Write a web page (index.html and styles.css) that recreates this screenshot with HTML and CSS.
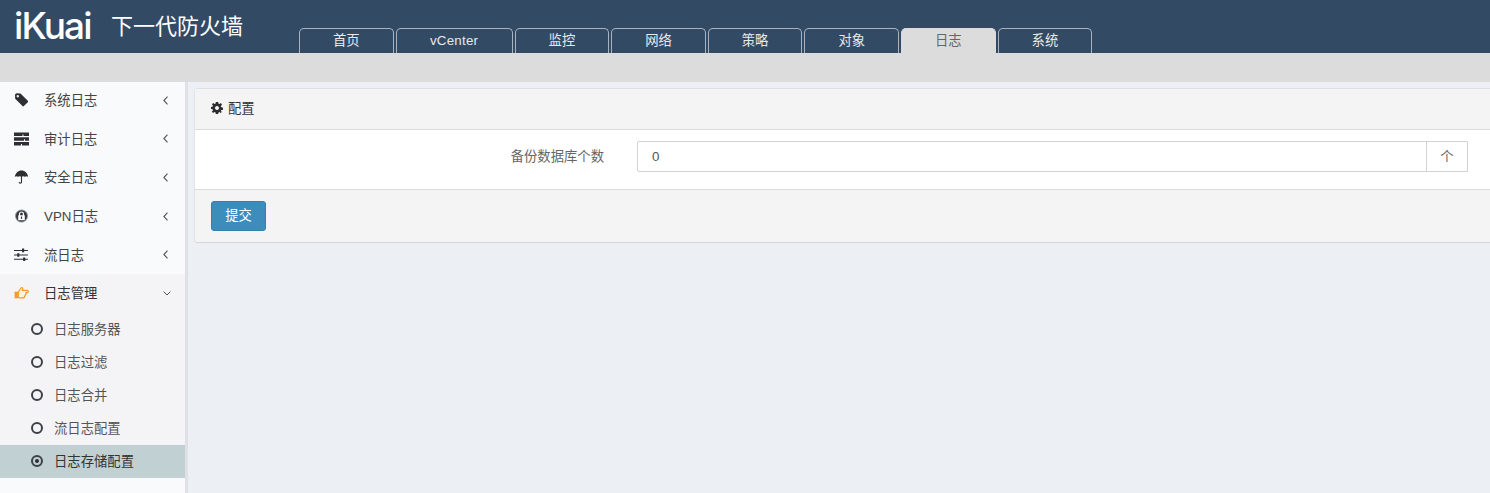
FILE: index.html
```html
<!DOCTYPE html>
<html lang="zh">
<head>
<meta charset="utf-8">
<title>iKuai</title>
<link rel="stylesheet" href="styles.css">
</head>
<body>
<header class="topbar">
  <div class="logo">iKuai</div>
  <div class="slogan">下一代防火墙</div>
  <nav class="tabs">
    <a class="tab">首页</a>
    <a class="tab tab-wide">vCenter</a>
    <a class="tab">监控</a>
    <a class="tab">网络</a>
    <a class="tab">策略</a>
    <a class="tab">对象</a>
    <a class="tab active">日志</a>
    <a class="tab">系统</a>
  </nav>
</header>
<div class="strip"></div>
<div class="main">
  <aside class="sidebar">
    <div class="item item-first">
      <svg class="ico" viewBox="0 0 14 14"><path fill="#2f2f33" fill-rule="evenodd" d="M.5 1.500 2 .2 6 .5l7.300 7.300a1 1 0 0 1 0 1.400l-3.900 3.900a1 1 0 0 1-1.400 0L.7 5.800zM3.300 2a1.200 1.200 0 1 0 .01 0z"/></svg>
      <span class="label">系统日志</span><svg class="chev" viewBox="0 0 5 9"><path d="M4.500.7.900 4.500l3.600 3.800" fill="none" stroke="#555" stroke-width="1.1"/></svg>
    </div>
    <div class="item">
      <svg class="ico" viewBox="0 0 15 13"><path fill="#2f2f33" d="M0 0h15v3.500H9.500V2H8.500v1.500H0zM0 4.700h15v3.500H11V6.700H10v1.500H0zM0 9.400h15v3.500H8V11.400H7v1.500H0z"/></svg>
      <span class="label">审计日志</span><svg class="chev" viewBox="0 0 5 9"><path d="M4.500.7.900 4.500l3.600 3.800" fill="none" stroke="#555" stroke-width="1.1"/></svg>
    </div>
    <div class="item">
      <svg class="ico" viewBox="0 0 14 14"><path fill="#2f2f33" d="M7 .5C3.500.5 1 3 .3 6.800c1-.9 2.200-.9 3.200 0 1-.9 2.500-.9 3.500 0 1-.9 2.500-.9 3.500 0 1-.9 2.200-.9 3.200 0C13 3 10.500.5 7 .5z"/><path d="M7 6v6c0 1.600-2.300 1.500-2.400 0" fill="none" stroke="#2f2f33" stroke-width="1.100"/></svg>
      <span class="label">安全日志</span><svg class="chev" viewBox="0 0 5 9"><path d="M4.500.7.900 4.500l3.600 3.800" fill="none" stroke="#555" stroke-width="1.1"/></svg>
    </div>
    <div class="item">
      <svg class="ico" viewBox="0 0 14 14"><circle cx="7" cy="7" r="6.500" fill="#8d8f93"/><circle cx="7" cy="7" r="5.500" fill="#38383c"/><path d="M5 7V5a2 2 0 0 1 4 0v2" fill="none" stroke="#fff" stroke-width="1.200"/><rect x="3.700" y="6.300" width="6.600" height="5" rx=".5" fill="#fff"/><rect x="6.400" y="7.500" width="1.200" height="2.400" fill="#333"/></svg>
      <span class="label">VPN日志</span><svg class="chev" viewBox="0 0 5 9"><path d="M4.500.7.900 4.500l3.600 3.800" fill="none" stroke="#555" stroke-width="1.1"/></svg>
    </div>
    <div class="item">
      <svg class="ico" viewBox="0 0 14 12"><path fill="#2f2f33" d="M0 1.300h7.500V0h2v1.300H13v1H9.500v1.200h-2V2.300H0zM0 5.500h3V4.300h2v1.200h8v1H5v1.200H3V6.500H0zM0 9.500h8.500V8.300h2v1.200H13v1h-2.500v1.200h-2v-1.200H0z"/></svg>
      <span class="label">流日志</span><svg class="chev" viewBox="0 0 5 9"><path d="M4.500.7.900 4.500l3.600 3.800" fill="none" stroke="#555" stroke-width="1.1"/></svg>
    </div>
    <div class="group">
      <div class="item item-open">
        <svg class="ico" viewBox="0 0 15 13"><path fill="#fff3e2" stroke="#f39a2d" stroke-width="1.200" d="M4.300 5.500 7.300 1.200c1.500-.5 2 1 1 2.600h4.900c1.500 0 1.500 2.200 0 2.300H12c.5.900.1 1.600-.6 1.900.2 1-.2 1.600-.9 1.800.1 1-.5 1.600-1.400 1.600H5.600L4.300 11z"/><rect x=".6" y="5.200" width="3.300" height="6.600" fill="#f39a2d"/></svg>
        <span class="label">日志管理</span><svg class="chev-down" viewBox="0 0 8 5"><path d="M.6.600 4 4 7.400.600" fill="none" stroke="#555" stroke-width="1"/></svg>
      </div>
      <div class="sub"><i class="dot"></i><span>日志服务器</span></div>
      <div class="sub"><i class="dot"></i><span>日志过滤</span></div>
      <div class="sub"><i class="dot"></i><span>日志合并</span></div>
      <div class="sub"><i class="dot"></i><span>流日志配置</span></div>
      <div class="sub sub-on"><i class="dot dot-on"></i><span>日志存储配置</span></div>
    </div>
  </aside>
  <section class="content">
    <div class="card">
      <div class="card-head">
        <svg class="gear" viewBox="0 0 12 12"><path fill="#2c2c30" fill-rule="evenodd" d="M4.800 0h2.400l.3 1.700 1 .4L10 1.100 11 2.800 9.800 4l.2 1.100 2 .7v1.900l-2 .6-.3 1L11 9.700 9.800 11 8.400 10l-.9.400L7.200 12H4.800l-.3-1.600-1-.4L2 11 .9 9.400 2 8.200l-.3-1L0 6.900V5l1.700-.5.300-1L.9 2.300 2.200 1l1.400 1 1-.4zM6 4a2 2 0 1 0 .01 0z"/></svg>
        <span class="head-text">配置</span>
      </div>
      <div class="card-body">
        <label class="field-label">备份数据库个数</label>
        <div class="input-group">
          <div class="input">0</div>
          <div class="addon">个</div>
        </div>
      </div>
      <div class="card-foot"><button class="btn">提交</button></div>
    </div>
  </section>
</div>
</body>
</html>
```
FILE: styles.css
```css
* { box-sizing: border-box; }
html, body { margin: 0; height: 100%; }
body {
  width: 1490px;
  height: 493px;
  overflow: hidden;
  font-family: "Liberation Sans", "Noto Sans CJK SC", sans-serif;
  font-size: 13.33px;
  color: #333;
  background: #ecf0f5;
}
.topbar {
  height: 53px;
  background: #334a64;
  display: flex;
  align-items: flex-start;
  color: #fff;
}
.logo {
  margin: 3px 0 0 14px;
  width: 96px;
  font-family: "Inter", "Liberation Sans", sans-serif;
  font-weight: 500;
  font-size: 37px;
  line-height: 46px;
  letter-spacing: -1.9px;
}
.slogan {
  margin: 11px 0 0 1px;
  width: 188px;
  font-size: 22px;
  line-height: 32px;
}
.tabs {
  display: flex;
  gap: 2.100px;
  margin-top: 28px;
  height: 25px;
}
.tab {
  width: 94.500px;
  height: 25px;
  border: 1px solid #a9b3bf;
  border-bottom: 0;
  border-radius: 5px 5px 0 0;
  color: #e6e9ed;
  text-align: center;
  font-size: 13.33px;
  line-height: 23px;
}
.tab-wide { width: 117px; letter-spacing: .25px; }
.tab.active { background: #dcdcdc; color: #666; border-color: #dcdcdc; }
.strip { height: 29px; background: #dcdcdc; }
.main { display: flex; height: 411px; }
.sidebar {
  width: 188px;
  flex: none;
  background: #f9fafc;
  border-right: 3px solid #dfe1e6;
}
.item {
  height: 38.600px;
  display: flex;
  align-items: center;
  padding-left: 14px;
  padding-right: 17px;
  color: #444;
}
.item-first { margin-top: -1px; }
.ico { width: 15px; height: 14px; flex: none; }
.label { margin-left: 15px; flex: 1; padding-bottom: 1px; }
.chev { width: 5px; height: 9px; flex: none; }
.chev-down { width: 8px; height: 5px; flex: none; margin-right: -3px; }
.group { background: #f4f4f6; }
.item-open { color: #333; }
.sub {
  height: 33px;
  display: flex;
  align-items: center;
  padding-left: 31px;
  color: #555;
}
.sub span { margin-left: 11px; padding-bottom: 1px; }
.dot {
  width: 12px;
  height: 12px;
  border: 2px solid #3c4148;
  border-radius: 50%;
  flex: none;
  position: relative;
}
.dot-on::after {
  content: "";
  position: absolute;
  left: 2px;
  top: 2px;
  width: 4px;
  height: 4px;
  border-radius: 50%;
  background: #2c2f33;
}
.sub-on { background: #c1d0d2; color: #333; }
.content { flex: 1; padding: 6px 0 0 7px; min-width: 0; }
.card {
  background: #fff;
  border-radius: 3px 0 0 3px;
  border-top: 1px solid #dde1e5;
  box-shadow: 0 1px 1px rgba(0, 0, 0, .12), -1px 0 0 #e4e6ea;
}
.card-head {
  height: 41px;
  background: #f4f4f4;
  border-bottom: 1px solid #dcdcdc;
  display: flex;
  align-items: center;
  padding: 0 0 2px 16px;
  color: #333;
}
.head-text { padding-bottom: 1px; }
.gear { width: 12px; height: 12px; margin-right: 5px; }
.card-body {
  height: 59px;
  display: flex;
  align-items: flex-start;
  padding: 11px 22px 0 0;
  background: #fff;
}
.field-label {
  width: 409px;
  text-align: right;
  color: #666;
  line-height: 32px;
}
.input-group {
  margin-left: 33px;
  flex: 1;
  height: 31px;
  display: flex;
  border: 1px solid #d2d2d2;
  border-radius: 2px 0 0 2px;
}
.input {
  flex: 1;
  padding-left: 14px;
  line-height: 29px;
  color: #555;
}
.addon {
  width: 41px;
  border-left: 1px solid #d2d2d2;
  text-align: center;
  line-height: 30px;
  color: #666;
}
.card-foot {
  height: 53px;
  background: #f4f4f4;
  border-top: 1px solid #dcdcdc;
  padding: 11px 0 0 16px;
  border-radius: 0 0 0 3px;
}
.btn {
  display: block;
  width: 55px;
  height: 30px;
  background: #3c8dbc;
  border: 1px solid #367fa9;
  border-radius: 3px;
  color: #fff;
  font-family: inherit;
  font-size: 13.33px;
  padding: 0 0 3px;
}
```
